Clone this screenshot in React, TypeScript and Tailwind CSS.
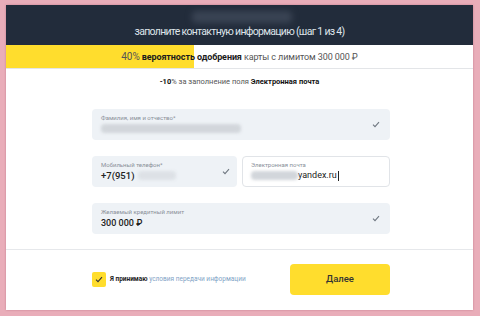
import React from 'react';

const Check: React.FC<{ className?: string }> = ({ className = '' }) => (
  <svg width="8" height="7" viewBox="0 0 8 7" className={className}>
    <path d="M1 3.6 L3 5.6 L7 1.2" fill="none" stroke="currentColor" strokeWidth="1.1" />
  </svg>
);

const Blur: React.FC<{ w: number; className?: string }> = ({ w, className = '' }) => (
  <span
    className={`inline-block h-[9px] rounded-sm bg-[#d2d6db] blur-[1.5px] ${className}`}
    style={{ width: w }}
  />
);

const App: React.FC = () => {
  return (
    <div
      className="w-[480px] h-[316px] bg-[#e9adb9] pl-[6px] pt-[5px] pr-[7px] pb-[6px]"
      style={{ fontFamily: 'Roboto, "Noto Sans", sans-serif' }}
    >
      <div className="w-full h-full bg-white flex flex-col shadow-[0_0_2px_rgba(150,60,80,0.4)]">
        {/* Header */}
        <div className="h-[40px] bg-[#222c3b] flex flex-col items-center relative">
          <span className="absolute left-[186px] top-[6px] w-[100px] h-[12px] bg-[#3a4454] blur-[3px] rounded" />
          <div className="mt-[22px] text-[10.5px] leading-none text-[#dfe4ea] tracking-[-0.7px]">
            заполните контактную информацию (шаг 1 из 4)
          </div>
        </div>

        {/* Progress */}
        <div className="h-[24px] relative border-b border-[#e3e5e8] flex items-center justify-center">
          <div className="absolute left-0 top-0 bottom-0 w-[188px] bg-[#ffdd2d]" />
          <div className="relative text-[9px] leading-none text-[#333] tracking-[-0.1px]">
            <span className="text-[#555] text-[10px]">40%</span>{' '}
            <span className="font-bold text-[#1b1b1b]">вероятность одобрения</span>{' '}
            <span className="text-[#555]">карты с лимитом 300 000 ₽</span>
          </div>
        </div>

        <div className="mt-[9px] text-center text-[7.5px] leading-none text-[#555]">
          <span className="font-bold text-[#111]">-10</span>% за заполнение поля{' '}
          <span className="font-bold text-[#111]">Электронная почта</span>
        </div>

        {/* Fields */}
        <div className="mt-[23px] ml-[86px] w-[298px] flex flex-col gap-[16px]">
          <div className="h-[31px] rounded bg-[#eef2f6] flex items-center pl-[9px] pr-[10px]">
            <div className="flex-1 flex flex-col gap-[3px]">
              <span className="text-[6px] leading-none text-[#8a9099]">Фамилия, имя и отчество*</span>
              <Blur w={140} className="bg-[#cfd3d8]" />
            </div>
            <Check className="text-[#6f7780]" />
          </div>

          <div className="flex gap-[5px]">
            <div className="w-[145px] h-[31px] rounded bg-[#eef2f6] flex items-center pl-[9px] pr-[7px]">
              <div className="flex-1 flex flex-col gap-[3px]">
                <span className="text-[6px] leading-none text-[#8a9099]">Мобильный телефон*</span>
                <div className="flex items-center text-[9.5px] leading-none text-[#222] font-medium">
                  +7(951)
                  <Blur w={38} className="ml-[4px] bg-[#dde1e6]" />
                </div>
              </div>
              <Check className="text-[#6f7780]" />
            </div>
            <div className="flex-1 h-[31px] rounded border border-[#e1e4e8] bg-white flex items-center pl-[8px]">
              <div className="flex flex-col gap-[3px]">
                <span className="text-[6px] leading-none text-[#8a9099]">Электронная почта</span>
                <div className="flex items-center text-[9px] leading-none text-[#222]">
                  <Blur w={47} className="bg-[#cdd1d6]" />
                  <span>yandex.ru</span>
                  <span className="ml-[1px] w-px h-[10px] bg-[#222]" />
                </div>
              </div>
            </div>
          </div>

          <div className="h-[31px] rounded bg-[#eef2f6] flex items-center pl-[9px] pr-[10px]">
            <div className="flex-1 flex flex-col gap-[4px]">
              <span className="text-[6px] leading-none text-[#8a9099]">Желаемый кредитный лимит</span>
              <span className="text-[9px] leading-none text-[#222] font-medium">300 000 ₽</span>
            </div>
            <Check className="text-[#6f7780]" />
          </div>
        </div>

        <div className="mt-[15px] border-t border-[#e6e8eb]" />

        {/* Footer */}
        <div className="mt-[14px] ml-[86px] w-[298px] flex items-center">
          <div className="w-[14px] h-[15px] rounded-[2px] bg-[#ffdd2d] flex items-center justify-center text-[#333]">
            <Check />
          </div>
          <div className="ml-[4px] text-[6.5px] leading-none">
            <span className="font-bold text-[#222]">Я принимаю</span>{' '}
            <span className="text-[#7fa3c6]">условия передачи информации</span>
          </div>
          <button className="ml-auto w-[100px] h-[31px] rounded bg-[#ffdd2d] text-[9.5px] text-[#333] font-medium">
            Далее
          </button>
        </div>
      </div>
    </div>
  );
};

export default App;
